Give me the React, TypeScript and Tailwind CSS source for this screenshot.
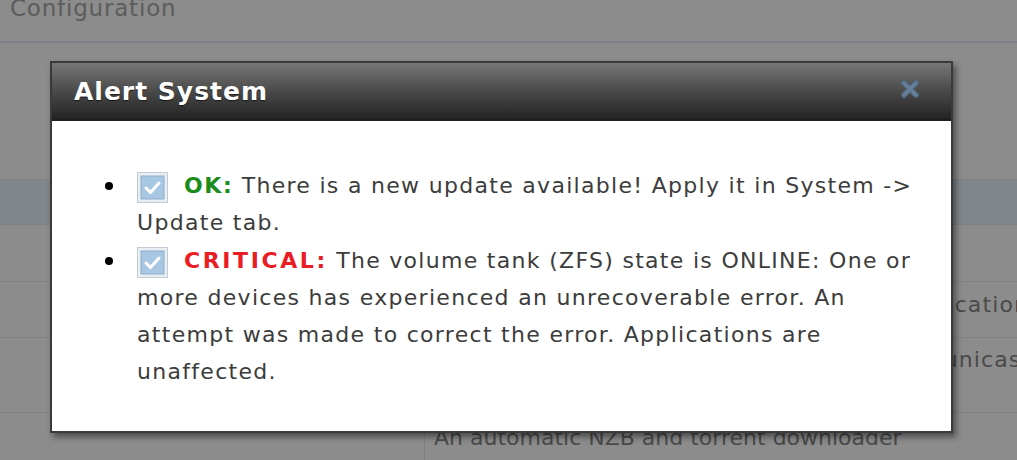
import React from 'react'

const FONT = "font-['DejaVu_Sans','Verdana',sans-serif]"

function CheckIcon() {
  return (
    <svg width="31" height="31" viewBox="0 0 31 31" className="inline-block align-middle">
      <rect x="0.5" y="0.5" width="30" height="30" fill="#e9eef2" stroke="#c3ccd4" />
      <rect x="4" y="4" width="23" height="23" fill="#a8c7e3" stroke="#8eaecb" />
      <path d="M9 16 L13.5 20.5 L22 11" fill="none" stroke="#ffffff" strokeWidth="3" strokeLinecap="round" strokeLinejoin="round" />
    </svg>
  )
}

function CloseIcon() {
  return (
    <svg width="22" height="20" viewBox="0 0 22 20">
      <path d="M5 4 L17 16 M17 4 L5 16" stroke="#4f667a" strokeWidth="6" strokeLinecap="round" />
      <path d="M5 4 L17 16 M17 4 L5 16" stroke="#66809a" strokeWidth="3.5" strokeLinecap="round" />
    </svg>
  )
}

function Bullet() {
  return (
    <div className="flex h-[37px] w-[32px] shrink-0 items-center">
      <span className="h-[8px] w-[8px] rounded-full bg-black" />
    </div>
  )
}

export default function App() {
  return (
    <div className={`relative h-[460px] w-[1017px] overflow-hidden bg-[#8c8c8c] ${FONT}`}>
      {/* page behind the overlay */}
      <div className="flex h-[43px] items-start border-b-2 border-[#7c8288] px-[10px]">
        <span className="-mt-[5px] text-[23px] leading-[26px] tracking-[0.8px] text-[#5c5c5c]">Configuration</span>
      </div>
      <div className="h-[136px]" />
      <div className="h-[46px] border-y border-[#7a8086] bg-[#80868b]" />

      <div className="grid h-[57px] grid-cols-[425px_1fr] border-b border-[#8a7f77]">
        <div className="border-r border-[#877c74]" />
        <div className="pl-[8px] pt-[12px] text-[22px] leading-[26px] text-[#4a4a4a]">CouchPotato</div>
      </div>
      <div className="grid h-[56px] grid-cols-[425px_1fr] border-b border-[#8a7f77]">
        <div className="border-r border-[#877c74]" />
        <div className="flex justify-end overflow-hidden whitespace-nowrap pt-[10px] text-[22px] leading-[26px] tracking-[1.1px] text-[#4a4a4a]">
          <span className="-mr-[12px]">Automatic TV show downloader with notification</span>
        </div>
      </div>
      <div className="grid h-[75px] grid-cols-[425px_1fr] border-b border-[#8a7f77]">
        <div className="border-r border-[#877c74]" />
        <div className="flex justify-end overflow-hidden whitespace-nowrap pt-[9px] text-[22px] leading-[26px] tracking-[1.1px] text-[#4a4a4a]">
          <span className="-mr-[14px]">Media server supporting DLNA multicast and unicast</span>
        </div>
      </div>
      <div className="grid h-[47px] grid-cols-[425px_1fr]">
        <div className="border-r border-[#877c74]" />
        <div className="whitespace-nowrap pl-[9px] pt-[12px] text-[22px] leading-[26px] text-[#4a4a4a]">
          An automatic NZB and torrent downloader
        </div>
      </div>

      {/* dialog */}
      <div className="absolute left-[50px] top-[61px] flex h-[372px] w-[903px] flex-col border-2 border-[#3a3a3a] bg-white shadow-[3px_4px_6px_rgba(0,0,0,0.45)]">
        <div className="flex h-[58px] items-center justify-between border-b-2 border-[#1e1e1e] bg-gradient-to-b from-[#777777] via-[#4a4a4a] to-[#242424] pl-[22px] pr-[30px]">
          <span className="text-[25px] font-bold leading-none tracking-[1px] text-white [text-shadow:0_1px_1px_rgba(0,0,0,0.6)]">
            Alert System
          </span>
          <span className="-mt-[4px]">
            <CloseIcon />
          </span>
        </div>
        <ul className="pl-[53px] pt-[46px] text-[22px] leading-[37px] tracking-[1.3px] text-[#3c3c3c]">
          <li className="flex">
            <Bullet />
            <div>
              <CheckIcon />
              <span className="ml-[16px] font-bold tracking-[1.6px] text-[#1c8c1c]">OK:</span> There is a new update available! Apply it in System -&gt;
              <br />
              Update tab.
            </div>
          </li>
          <li className="mt-[1px] flex">
            <Bullet />
            <div>
              <CheckIcon />
              <span className="ml-[16px] font-bold tracking-[2.6px] text-[#ea1c24]">CRITICAL:</span> The volume tank (ZFS) state is ONLINE: One or
              <br />
              more devices has experienced an unrecoverable error. An
              <br />
              attempt was made to correct the error. Applications are
              <br />
              unaffected.
            </div>
          </li>
        </ul>
      </div>
    </div>
  )
}
